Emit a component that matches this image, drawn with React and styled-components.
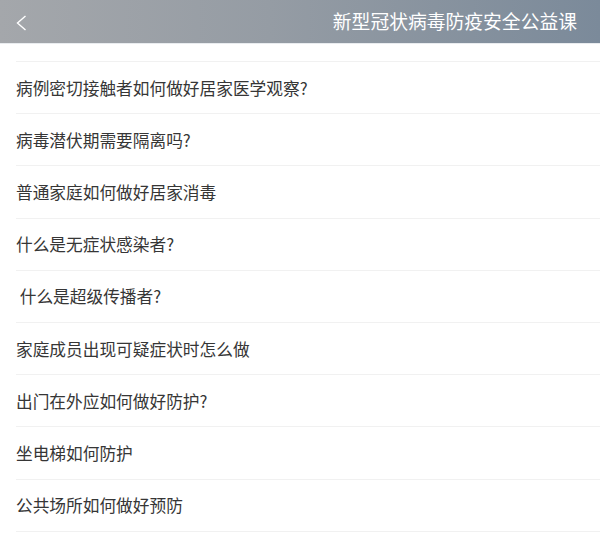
import styled, { createGlobalStyle } from "styled-components"

const GlobalStyle = createGlobalStyle`
  html, body {
    margin: 0;
    padding: 0;
    background: #ffffff;
  }
  body {
    font-family: "Noto Sans CJK SC", "Noto Sans", sans-serif;
  }
`

const ITEMS = [
  "病例密切接触者如何做好居家医学观察?",
  "病毒潜伏期需要隔离吗?",
  "普通家庭如何做好居家消毒",
  "什么是无症状感染者?",
  " 什么是超级传播者?",
  "家庭成员出现可疑症状时怎么做",
  "出门在外应如何做好防护?",
  "坐电梯如何防护",
  "公共场所如何做好预防",
]

export default function App() {
  return (
    <Page>
      <GlobalStyle />

      <Header>
        <BackButton aria-label="back">
          <svg width="13" height="16" viewBox="0 0 13 16" fill="none">
            <path d="M10.5 1 L2.5 8 L10.5 15" stroke="#ffffff" strokeWidth="1.4" strokeLinejoin="miter" />
          </svg>
        </BackButton>
        <Title>新型冠状病毒防疫安全公益课</Title>
      </Header>

      <List>
        {ITEMS.map((text, index) => (
          <Row key={index}>{text}</Row>
        ))}
      </List>
    </Page>
  )
}

//STYLES

const Page = styled.div`
  width: 600px;
  min-height: 541px;
  background: #ffffff;
  overflow: hidden;
`
const Header = styled.div`
  display: flex;
  align-items: center;
  justify-content: space-between;
  height: 44px;
  padding: 0 23px 0 15px;
  background: linear-gradient(90deg, #a4a7ab 0%, #959ca4 45%, #7b8a9a 100%);
  border-bottom: 1px solid #e9ecef;
  box-sizing: border-box;
`
const BackButton = styled.div`
  display: flex;
  align-items: center;
  height: 100%;
  padding-top: 2px;
`
const Title = styled.div`
  font-size: 18.8px;
  color: #ffffff;
  line-height: 1;
`
const List = styled.div`
  display: flex;
  flex-direction: column;
  margin-top: 17px;
  margin-left: 16px;
  border-top: 1px solid #f1f1f1;
`
const Row = styled.div`
  display: flex;
  align-items: center;
  height: 51.2px;
  border-bottom: 1px solid #f1f1f1;
  font-size: 16.7px;
  color: #363636;
  white-space: pre;
`
